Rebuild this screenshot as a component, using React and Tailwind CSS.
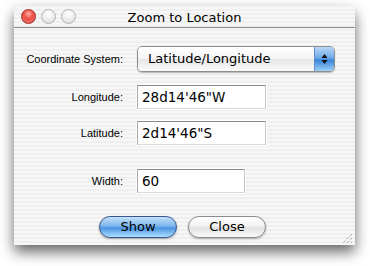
import React from "react";

const stripes =
  "bg-[repeating-linear-gradient(180deg,#efefef_0px,#efefef_2px,#f7f7f7_2px,#f7f7f7_4px)]";

function Light({ red }) {
  return (
    <span
      className={
        red
          ? "h-[15px] w-[15px] rounded-full border border-[#a52a2a] bg-[radial-gradient(circle_at_50%_30%,#ffb0a8_0%,#f0483c_45%,#b81e14_100%)] shadow-[inset_0_-2px_3px_rgba(255,160,150,0.7)]"
          : "h-[15px] w-[15px] rounded-full border border-[#b4b4b4] bg-[radial-gradient(circle_at_50%_30%,#ffffff_0%,#ececec_55%,#d4d4d4_100%)]"
      }
    />
  );
}

function Row({ label, children, className }) {
  return (
    <div className={`flex items-center ${className}`}>
      <div
        className="w-[110px] pr-[1px] text-right text-[11px] text-black"
        style={{ fontFamily: '"Liberation Sans", Arial, sans-serif' }}
      >
        {label}
      </div>
      <div className="ml-[13px]">{children}</div>
    </div>
  );
}

function Field({ value, width }) {
  return (
    <div
      className={`${width} flex h-[24px] items-center border border-t-[#8a8a8a] border-l-[#a8a8a8] border-r-[#c8c8c8] border-b-[#d8d8d8] bg-white pl-[4px] text-[13.5px] text-black shadow-[0_0_0_1px_#ffffff]`}
    >
      {value}
    </div>
  );
}

export default function App() {
  return (
    <div
      className="h-[266px] w-[370px] bg-white pl-[14px] pt-[5px]"
      style={{ fontFamily: '"DejaVu Sans", "Liberation Sans", sans-serif' }}
    >
      <div
        className={`flex h-[240px] w-[341px] flex-col rounded-t-[7px] ${stripes} shadow-[0_7px_14px_rgba(0,0,0,0.6)]`}
      >
        {/* title bar */}
        <div className="relative flex h-[23px] items-center border-b border-[#8c8c8c]">
          <div className="flex items-center gap-[5px] pl-[7px]">
            <Light red />
            <Light />
            <Light />
          </div>
          <div className="absolute inset-x-0 top-[3px] text-center text-[13px] text-black">
            Zoom to Location
          </div>
        </div>

        {/* content */}
        <div className="relative flex flex-1 flex-col">
          <Row label="Coordinate System:" className="mt-[18px]">
            <div className="flex h-[26px] w-[198px] overflow-hidden rounded-[5px] border border-[#8e8e8e] shadow-[0_1px_1px_rgba(0,0,0,0.25)]">
              <div className="flex flex-1 items-center bg-[linear-gradient(180deg,#ffffff_0%,#f4f4f4_50%,#e6e6e6_51%,#fbfbfb_100%)] pl-[10px] text-[13px] text-black">
                Latitude/Longitude
              </div>
              <div className="flex w-[20px] flex-col items-center justify-center border-l border-[#5d8cc8] bg-[linear-gradient(180deg,#b9d8f6_0%,#6eaae8_45%,#3a83d8_55%,#9cd0f8_100%)]">
                <svg width="7" height="12" viewBox="0 0 7 12">
                  <path d="M3.5 1 L6.5 5 L0.5 5 Z" fill="#111" />
                  <path d="M3.5 11 L6.5 7 L0.5 7 Z" fill="#111" />
                </svg>
              </div>
            </div>
          </Row>

          <Row label="Longitude:" className="mt-[13px]">
            <Field value={"28d14'46\"W"} width="w-[129px]" />
          </Row>

          <Row label="Latitude:" className="mt-[12px]">
            <Field value={"2d14'46\"S"} width="w-[129px]" />
          </Row>

          <Row label="Width:" className="mt-[24px]">
            <Field value="60" width="w-[108px]" />
          </Row>

          <div className="mt-[23px] flex pl-[85px]">
            <button className="flex h-[22px] w-[78px] items-center justify-center rounded-full border border-[#35588f] bg-[linear-gradient(180deg,#c4e0fa_0%,#7db6ee_45%,#4a94e2_55%,#aee0ff_100%)] text-[13px] text-black shadow-[0_1px_2px_rgba(0,0,0,0.35)]">
              Show
            </button>
            <button className="ml-[11px] flex h-[22px] w-[78px] items-center justify-center rounded-full border border-[#8a8a8a] bg-[linear-gradient(180deg,#ffffff_0%,#f2f2f2_45%,#e2e2e2_55%,#fafafa_100%)] text-[13px] text-black shadow-[0_1px_2px_rgba(0,0,0,0.3)]">
              Close
            </button>
          </div>

          {/* resize grip */}
          <div className="absolute bottom-[1px] right-[2px]">
            <svg width="13" height="13" viewBox="0 0 13 13">
              <path d="M12 3 L3 12 M12 7 L7 12 M12 11 L11 12" stroke="#8a8a8a" strokeWidth="1" strokeDasharray="1 1" />
            </svg>
          </div>
        </div>
      </div>
    </div>
  );
}
